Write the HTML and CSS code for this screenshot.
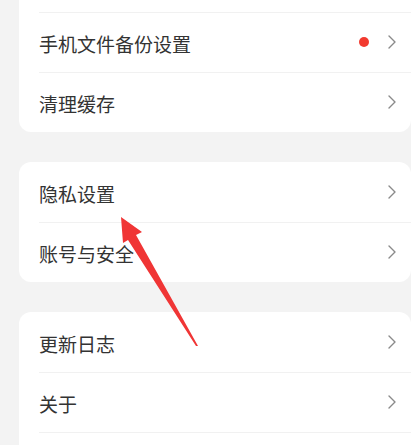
FILE: index.html
```html
<!DOCTYPE html>
<html lang="zh-CN">
<head>
<meta charset="utf-8">
<title>设置</title>
<link rel="stylesheet" href="styles.css">
</head>
<body>
<div class="page">
  <section class="card card-first">
    <div class="row row-cut"></div>
    <div class="row">
      <span class="label">手机文件备份设置</span>
      <span class="dot"></span>
      <svg class="chev" viewBox="0 0 8 14" width="8" height="14"><path d="M1 1 L7 7 L1 13" /></svg>
    </div>
    <div class="row">
      <span class="label">清理缓存</span>
      <svg class="chev" viewBox="0 0 8 14" width="8" height="14"><path d="M1 1 L7 7 L1 13" /></svg>
    </div>
  </section>
  <section class="card">
    <div class="row">
      <span class="label">隐私设置</span>
      <svg class="chev" viewBox="0 0 8 14" width="8" height="14"><path d="M1 1 L7 7 L1 13" /></svg>
    </div>
    <div class="row">
      <span class="label">账号与安全</span>
      <svg class="chev" viewBox="0 0 8 14" width="8" height="14"><path d="M1 1 L7 7 L1 13" /></svg>
    </div>
  </section>
  <section class="card">
    <div class="row">
      <span class="label">更新日志</span>
      <svg class="chev" viewBox="0 0 8 14" width="8" height="14"><path d="M1 1 L7 7 L1 13" /></svg>
    </div>
    <div class="row">
      <span class="label">关于</span>
      <svg class="chev" viewBox="0 0 8 14" width="8" height="14"><path d="M1 1 L7 7 L1 13" /></svg>
    </div>
    <div class="row"></div>
  </section>
</div>
<svg class="arrow" viewBox="0 0 411 445" width="411" height="445">
  <polygon points="121,217 142,232 136,235 198,346 196,346 128,240 123,243" />
</svg>
</body>
</html>
```

FILE: styles.css
```css
html, body {
  margin: 0;
  padding: 0;
}
body {
  background: #f3f3f3;
  width: 411px;
  height: 445px;
  overflow: hidden;
  position: relative;
  font-family: "Noto Sans CJK SC", "Noto Sans", sans-serif;
}
.page {
  display: flex;
  flex-direction: column;
  gap: 30px;
  padding-left: 19px;
}
.card {
  background: #ffffff;
  border-radius: 12px;
  display: flex;
  flex-direction: column;
}
.card-first {
  border-top-left-radius: 0;
  border-top-right-radius: 0;
}
.row {
  height: 60px;
  display: flex;
  align-items: center;
  padding: 0 15px 0 20px;
  position: relative;
  flex-shrink: 0;
}
.row + .row::before {
  content: "";
  position: absolute;
  top: 0;
  left: 20px;
  right: 0;
  height: 1px;
  background: #f1f1f1;
}
.row-cut {
  height: 12px;
}
.label {
  flex: 1;
  font-size: 19px;
  color: #333333;
  line-height: 1;
  padding-top: 3px;
}
.dot {
  width: 10px;
  height: 10px;
  border-radius: 50%;
  background: #f23a2f;
  margin-right: 19px;
}
.chev {
  display: block;
}
.chev path {
  fill: none;
  stroke: #8a8a8a;
  stroke-width: 1.4;
  stroke-linecap: round;
  stroke-linejoin: round;
}
.arrow {
  position: absolute;
  top: 0;
  left: 0;
  pointer-events: none;
}
.arrow polygon {
  fill: #f03535;
}
```
